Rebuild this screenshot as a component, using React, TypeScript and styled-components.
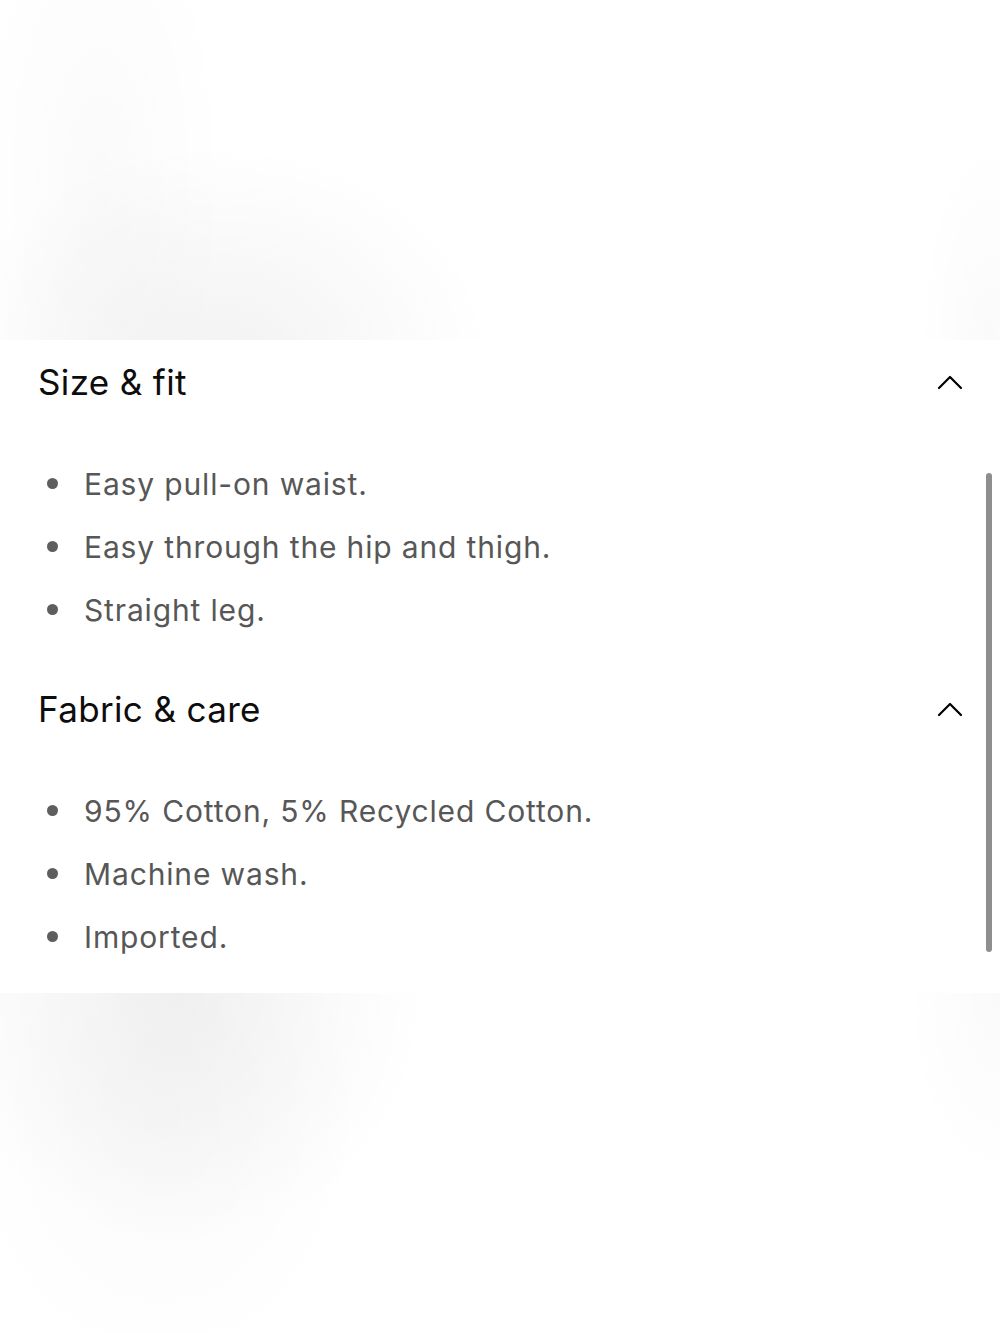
import React from "react";
import styled, { createGlobalStyle } from "styled-components";

const GlobalStyle = createGlobalStyle`
  html, body { margin: 0; padding: 0; background: #ffffff; }
  body { font-family: Inter, "Noto Sans", Arial, sans-serif; -webkit-font-smoothing: antialiased; }
  * { box-sizing: border-box; }
`;

const Page = styled.div`
  width: 1000px;
  height: 1333px;
  display: flex;
  flex-direction: column;
  overflow: hidden;
`;

const TopBackdrop = styled.div`
  height: 340px;
  flex: none;
  background:
    radial-gradient(ellipse 380px 300px at 220px 360px, rgba(0,0,0,0.05), rgba(0,0,0,0) 72%),
    radial-gradient(ellipse 150px 380px at 100px 180px, rgba(0,0,0,0.018), rgba(0,0,0,0) 85%),
    radial-gradient(ellipse 90px 260px at 990px 340px, rgba(0,0,0,0.018), rgba(0,0,0,0) 80%),
    #ffffff;
`;

const BottomBackdrop = styled.div`
  height: 340px;
  flex: none;
  background:
    radial-gradient(ellipse 330px 340px at 180px 0px, rgba(0,0,0,0.05), rgba(0,0,0,0) 75%),
    radial-gradient(ellipse 260px 340px at 160px 120px, rgba(0,0,0,0.02), rgba(0,0,0,0) 80%),
    radial-gradient(ellipse 120px 240px at 1000px 0px, rgba(0,0,0,0.018), rgba(0,0,0,0) 80%),
    #ffffff;
`;

const Panel = styled.div`
  position: relative;
  flex: none;
  height: 653px;
  background: #ffffff;
  padding: 0 0 0 38px;
  display: flex;
  flex-direction: column;
`;

const Section = styled.section`
  display: flex;
  flex-direction: column;
  & + & {
    margin-top: 26px;
  }
`;

const SectionHeader = styled.div`
  height: 84px;
  display: flex;
  align-items: center;
  justify-content: space-between;
  padding-right: 37px;
`;

const Title = styled.h2`
  margin: 0;
  font-family: Inter, "Noto Sans", Arial, sans-serif;
  font-weight: 400;
  font-size: 35px;
  line-height: 40px;
  color: #0d0d0d;
  letter-spacing: 0.35px;
`;

const Toggle = styled.button`
  border: 0;
  background: transparent;
  padding: 0;
  width: 26px;
  height: 16px;
  display: flex;
  align-items: center;
  justify-content: center;
  cursor: pointer;
`;

const List = styled.ul`
  list-style: none;
  margin: 28px 0 0;
  padding: 0;
`;

const Item = styled.li`
  display: flex;
  align-items: center;
  height: 63px;
  font-family: Inter, "Noto Sans", Arial, sans-serif;
  font-size: 30px;
  color: #575757;
  letter-spacing: 0.85px;
  &::before {
    content: "";
    flex: none;
    width: 11px;
    height: 11px;
    border-radius: 50%;
    background: #5e5e5e;
    margin: 0 26px 0 9px;
  }
`;

const Scrollbar = styled.div`
  position: absolute;
  right: 8px;
  top: 133px;
  width: 6px;
  height: 479px;
  border-radius: 3px;
  background: #8e8e8e;
`;

const Chevron = () => (
  <svg width="26" height="16" viewBox="0 0 26 16" fill="none">
    <polyline
      points="2,14 13,3 24,14"
      stroke="#000"
      strokeWidth="2.2"
      strokeLinecap="round"
      strokeLinejoin="round"
    />
  </svg>
);

const sections = [
  {
    title: "Size & fit",
    items: ["Easy pull-on waist.", "Easy through the hip and thigh.", "Straight leg."],
  },
  {
    title: "Fabric & care",
    items: ["95% Cotton, 5% Recycled Cotton.", "Machine wash.", "Imported."],
  },
];

export default function App() {
  return (
    <>
      <GlobalStyle />
      <Page>
        <TopBackdrop />
        <Panel>
          {sections.map((s) => (
            <Section key={s.title}>
              <SectionHeader>
                <Title>{s.title}</Title>
                <Toggle aria-label="Collapse">
                  <Chevron />
                </Toggle>
              </SectionHeader>
              <List>
                {s.items.map((it) => (
                  <Item key={it}>{it}</Item>
                ))}
              </List>
            </Section>
          ))}
          <Scrollbar />
        </Panel>
        <BottomBackdrop />
      </Page>
    </>
  );
}
